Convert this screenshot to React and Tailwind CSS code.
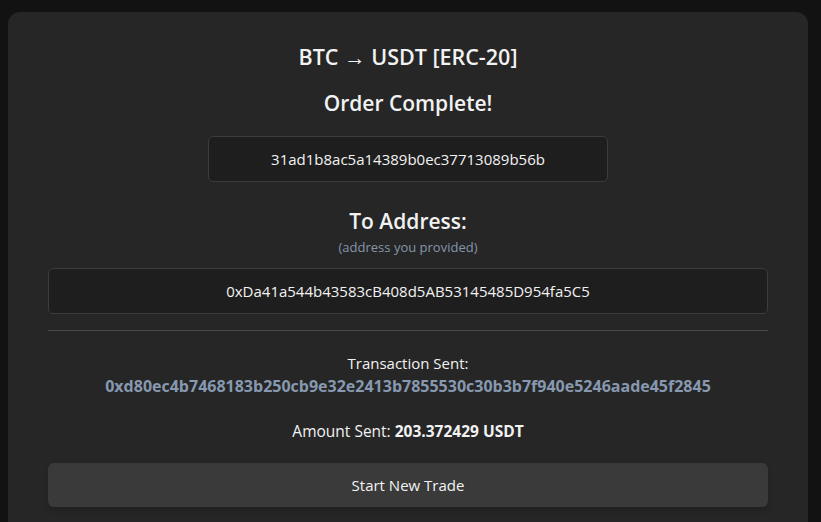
const font = { fontFamily: '"Open Sans", "Noto Sans", sans-serif' };

const OrderComplete = () => {
  return (
    <div className="min-h-screen bg-[#121212] px-2 pt-3" style={font}>
      <div className="w-[800px] bg-[#262626] rounded-xl px-10 pt-[31px] pb-10 flex flex-col items-center text-[#f2f2f2]">
        <h2 className="text-[21.5px] leading-[28px] font-semibold">BTC → USDT [ERC-20]</h2>
        <h2 className="mt-[18px] text-[21px] leading-[28px] font-semibold">Order Complete!</h2>

        <div className="mt-[19px] w-[400px] h-[46px] flex items-center justify-center bg-[#1e1e1e] border border-[#3c3c3c] rounded-[5px] text-[15px]">
          31ad1b8ac5a14389b0ec37713089b56b
        </div>

        <h2 className="mt-[24px] text-[21px] leading-[30px] font-semibold">To Address:</h2>
        <p className="mt-[3px] text-[13px] leading-[16px] text-[#8496ab]">(address you provided)</p>

        <div className="mt-[13px] w-full h-[46px] flex items-center justify-center bg-[#1e1e1e] border border-[#3c3c3c] rounded-[5px] text-[15px]">
          0xDa41a544b43583cB408d5AB53145485D954fa5C5
        </div>

        <div className="mt-[16px] w-full h-px bg-[#4a4a4a]" />

        <p className="mt-[21px] text-[15px] leading-[22px]">Transaction Sent:</p>
        <p className="mt-px text-[16px] leading-[22px] font-bold text-[#8799b0]">
          0xd80ec4b7468183b250cb9e32e2413b7855530c30b3b7f940e5246aade45f2845
        </p>

        <p className="mt-[23px] text-[15.5px] leading-[22px]">
          Amount Sent: <span className="font-bold">203.372429 USDT</span>
        </p>

        <button className="mt-[21px] w-full h-[44px] bg-[#3a3a3a] rounded-md text-[15px] text-[#f2f2f2] shadow-md">
          Start New Trade
        </button>
      </div>
    </div>
  );
};

export default function App() {
  return <OrderComplete />;
}
